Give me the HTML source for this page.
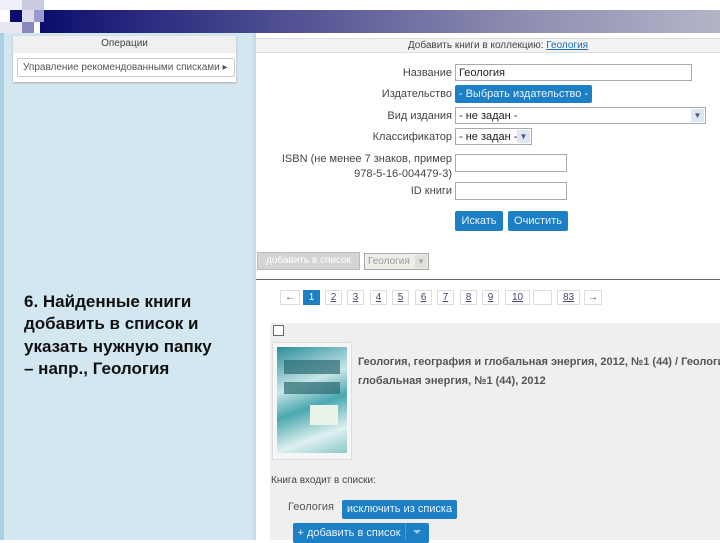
<!DOCTYPE html>
<html><head><meta charset="utf-8"><style>
*{margin:0;padding:0;box-sizing:border-box}
body{width:720px;height:540px;overflow:hidden;background:#fff;position:relative;font-family:"Liberation Sans","DejaVu Sans",sans-serif;color:#333}
.a{position:absolute}
.btn{position:absolute;background:#1d7fc4;color:#e8f4ff;font-size:11px;text-align:center;border-radius:2px;line-height:20px}
.inp{position:absolute;border:1px solid #aaa;background:#fff;font-size:11px;color:#222;padding-left:3px;line-height:16px}
.lbl{position:absolute;right:268px;font-size:11px;color:#444;text-align:right}
.pg{position:absolute;top:290px;height:15px;border:1px solid #ddd;font-size:10px;text-align:center;line-height:13px;color:#447;text-decoration:underline}
</style></head><body>
<div class="a" style="left:0;top:33px;width:256px;height:507px;background:#d3e7f1"></div>
<div class="a" style="left:0;top:33px;width:4px;height:507px;background:#a8cfe2"></div>
<div class="a" style="left:253px;top:33px;width:3px;height:507px;background:#c9dbe5"></div>
<div class="a" style="left:40px;top:10px;width:680px;height:23px;background:linear-gradient(90deg,#0c0c6e,#2a2a80 15%,#8c8cb0 70%,#b4b4c8)"></div>
<div class="a" style="left:22px;top:0;width:22px;height:12px;background:#cacae0"></div>
<div class="a" style="left:0;top:0;width:22px;height:10px;background:#f0f0f8"></div>
<div class="a" style="left:10px;top:10px;width:12px;height:12px;background:#0c0c6e"></div>
<div class="a" style="left:34px;top:10px;width:10px;height:12px;background:#9a9acc"></div>
<div class="a" style="left:22px;top:22px;width:12px;height:11px;background:#8888bb"></div>
<div class="a" style="left:0;top:22px;width:22px;height:11px;background:#e8e8f0"></div>
<div class="a" style="left:22px;top:10px;width:12px;height:12px;background:#dcdcec"></div>
<div class="a" style="left:13px;top:36px;width:223px;height:46px;background:#fff;box-shadow:0 1px 2px #aaa"></div>
<div class="a" style="left:13px;top:36px;width:223px;height:17px;background:#f0f0f0;font-size:10px;text-align:center;line-height:16px;color:#444">Операции</div>
<div class="a" style="left:17px;top:58px;width:218px;height:19px;border:1px solid #ccc;border-radius:2px;font-size:10px;line-height:17px;padding-left:5px;color:#555;white-space:nowrap;overflow:hidden">Управление рекомендованными списками ▸</div>
<div class="a" style="left:256px;top:38px;width:464px;height:15px;background:#f3f3f3;border-top:1px solid #ddd;border-bottom:1px solid #ddd;font-size:10px;text-align:center;line-height:13px;color:#444;padding-left:20px">Добавить книги в коллекцию: <span style="color:#1a6fb8;text-decoration:underline">Геология</span></div>
<div class="lbl" style="top:67px">Название</div>
<div class="inp" style="left:455px;top:64px;width:237px;height:17px">Геология</div>
<div class="lbl" style="top:88px">Издательство</div>
<div class="btn" style="left:455px;top:85px;width:137px;height:18px;line-height:18px">- Выбрать издательство -</div>
<div class="lbl" style="top:110px">Вид издания</div>
<div class="inp" style="left:455px;top:107px;width:251px;height:17px">- не задан -<span style="position:absolute;right:1px;top:1px;width:13px;height:13px;background:#dde8f4;font-size:8px;color:#557;text-align:center;line-height:13px">▼</span></div>
<div class="lbl" style="top:131px">Классификатор</div>
<div class="inp" style="left:455px;top:128px;width:77px;height:17px">- не задан -<span style="position:absolute;right:1px;top:1px;width:13px;height:13px;background:#dde8f4;font-size:8px;color:#557;text-align:center;line-height:13px">▼</span></div>
<div class="lbl" style="top:152px;line-height:15px">ISBN (не менее 7 знаков, пример<br>978-5-16-004479-3)</div>
<div class="inp" style="left:455px;top:154px;width:112px;height:18px"></div>
<div class="lbl" style="top:185px">ID книги</div>
<div class="inp" style="left:455px;top:182px;width:112px;height:18px"></div>
<div class="btn" style="left:455px;top:211px;width:48px">Искать</div>
<div class="btn" style="left:508px;top:211px;width:60px">Очистить</div>
<div class="a" style="left:257px;top:252px;width:103px;height:18px;background:#d4d4d4;border:1px solid #bbb;font-size:10px;color:#fff;line-height:16px;text-align:center">добавить в список</div>
<div class="a" style="left:364px;top:253px;width:65px;height:17px;background:#eeeee8;border:1px solid #aaa;font-size:10px;color:#999;line-height:15px;padding-left:3px">Геология<span style="position:absolute;right:1px;top:1px;width:12px;height:13px;background:#e0e0da;font-size:8px;color:#aaa;text-align:center;line-height:13px">▼</span></div>
<div class="a" style="left:256px;top:279px;width:464px;height:1px;background:#666"></div>
<div class="pg" style="left:280px;width:20px;text-decoration:none">←</div>
<div class="pg" style="left:303px;width:17px;background:#1d7fc4;border-color:#1d7fc4;color:#fff;text-decoration:none">1</div>
<div class="pg" style="left:325px;width:17px">2</div>
<div class="pg" style="left:347px;width:17px">3</div>
<div class="pg" style="left:370px;width:17px">4</div>
<div class="pg" style="left:392px;width:17px">5</div>
<div class="pg" style="left:415px;width:17px">6</div>
<div class="pg" style="left:437px;width:17px">7</div>
<div class="pg" style="left:460px;width:17px">8</div>
<div class="pg" style="left:482px;width:17px">9</div>
<div class="pg" style="left:505px;width:25px">10</div>
<div class="pg" style="left:533px;width:19px"></div>
<div class="pg" style="left:557px;width:23px">83</div>
<div class="pg" style="left:584px;width:18px;text-decoration:none">→</div>
<div class="a" style="left:270px;top:323px;width:450px;height:217px;background:#efefef;overflow:hidden"></div>
<div class="a" style="left:273px;top:325px;width:11px;height:11px;border:1px solid #667;background:#fff"></div>
<div class="a" style="left:272px;top:342px;width:80px;height:118px;background:#f6f6f6;border:1px solid #ddd"></div>
<div class="a" style="left:277px;top:347px;width:70px;height:106px;background:linear-gradient(160deg,#2a8e9a,#c8e6e8 35%,#4aa8b0 55%,#e0f0f0 80%,#8ac8c8)"></div>
<div class="a" style="left:284px;top:360px;width:56px;height:14px;background:#2a6a70;opacity:.7"></div>
<div class="a" style="left:284px;top:382px;width:56px;height:12px;background:#2a6a70;opacity:.7"></div>
<div class="a" style="left:310px;top:405px;width:28px;height:20px;background:#e8f4e8"></div>
<div class="a" style="left:358px;top:353px;width:362px;overflow:hidden;font-size:11px;font-weight:bold;color:#555;line-height:19px;white-space:nowrap">Геология, география и глобальная энергия, 2012, №1 (44) / Геология, геог<br>глобальная энергия, №1 (44), 2012</div>
<div class="a" style="left:271px;top:475px;font-size:10px;color:#444">Книга входит в списки:</div>
<div class="a" style="left:288px;top:501px;font-size:11px;color:#555">Геология</div>
<div class="btn" style="left:342px;top:500px;width:115px;height:19px;line-height:19px">исключить из списка</div>
<div class="btn" style="left:293px;top:523px;width:136px;height:20px;padding-right:24px">+ добавить в список</div>
<div class="a" style="left:405px;top:523px;width:1px;height:17px;background:#4a9ad4"></div>
<div class="a" style="left:413px;top:530px;width:0;height:0;border-left:4px solid transparent;border-right:4px solid transparent;border-top:4px solid #9cc8ea"></div>
<div class="a" style="left:24px;top:291px;font-size:17px;font-weight:bold;color:#111;line-height:22.3px;white-space:nowrap">6. Найденные книги<br>добавить в список и<br>указать нужную папку<br>– напр., Геология</div>
</body></html>
